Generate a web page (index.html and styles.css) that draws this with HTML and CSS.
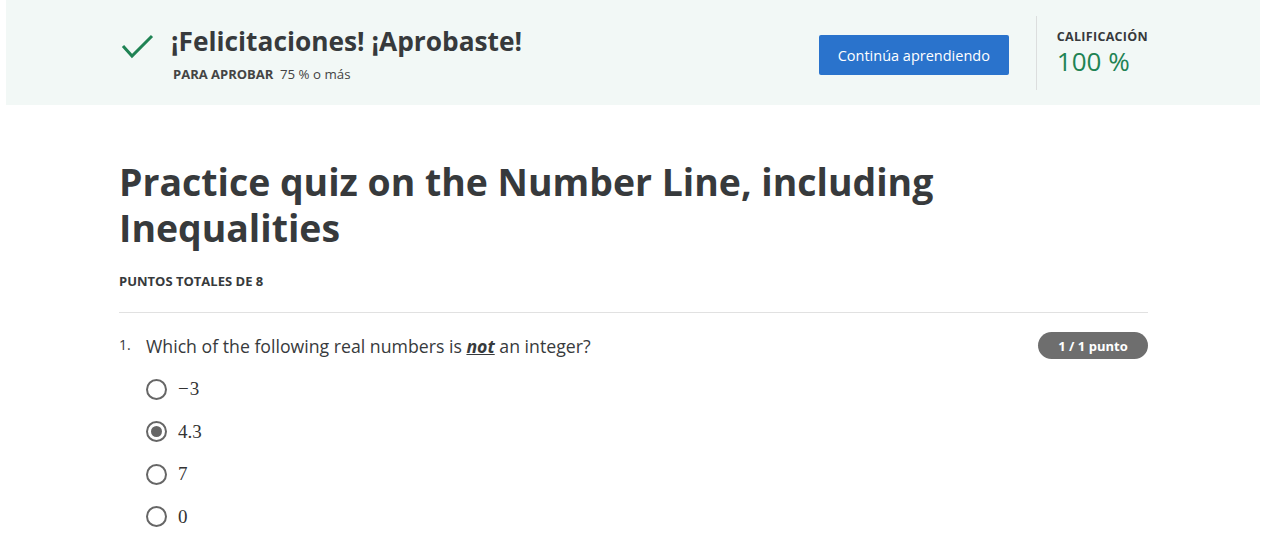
FILE: index.html
```html
<!DOCTYPE html>
<html lang="es">
<head>
<meta charset="utf-8">
<title>Practice quiz</title>
<link rel="stylesheet" href="styles.css">
</head>
<body>
<header class="banner">
  <div class="banner-inner">
    <div class="result">
      <svg class="check" width="34" height="26" viewBox="0 0 34 26"><polyline points="2,12 11,22 31,2" fill="none" stroke="#1f8354" stroke-width="3"/></svg>
      <div class="result-text">
        <h2 class="congrats">¡Felicitaciones! ¡Aprobaste!</h2>
        <p class="pass"><span class="pass-label">PARA APROBAR</span> 75 % o más</p>
      </div>
    </div>
    <button class="continue">Continúa aprendiendo</button>
    <div class="divider"></div>
    <div class="grade">
      <div class="grade-label">CALIFICACIÓN</div>
      <div class="grade-value">100 %</div>
    </div>
  </div>
</header>
<main class="content">
  <h1 class="title">Practice quiz on the Number Line, including Inequalities</h1>
  <div class="total">PUNTOS TOTALES DE 8</div>
  <hr class="rule">
  <section class="question">
    <div class="q-head">
      <span class="q-num">1.</span>
      <span class="q-text">Which of the following real numbers is <em class="not">not</em> an integer?</span>
      <span class="badge">1 / 1 punto</span>
    </div>
    <ul class="options">
      <li class="option"><span class="radio"></span><span class="math"><span class="minus">−</span>3</span></li>
      <li class="option"><span class="radio checked"></span><span class="math">4.3</span></li>
      <li class="option"><span class="radio"></span><span class="math">7</span></li>
      <li class="option"><span class="radio"></span><span class="math">0</span></li>
    </ul>
  </section>
</main>
</body>
</html>
```
FILE: styles.css
```css
* { box-sizing: border-box; }
body {
  margin: 0;
  font-family: "Open Sans", "Noto Sans", sans-serif;
  color: #373a3c;
  background: #fff;
}
.banner {
  margin: 0 10px 0 6px;
  height: 105px;
  background: #f2f8f6;
}
.banner-inner {
  margin-left: 113px;
  width: 1029px;
  height: 105px;
  display: flex;
  align-items: center;
}
.result {
  display: flex;
  align-items: flex-start;
  flex: 1;
  align-self: flex-start;
  margin-top: 24px;
}
.check { margin: 10px 16px 0 2px; }
.congrats {
  margin: 0;
  font-size: 26.3px;
  font-weight: 700;
  line-height: 34px;
  color: #373a3c;
}
.pass {
  margin: 7px 0 0 2px;
  font-size: 13.3px;
  line-height: 18px;
  color: #444;
}
.pass-label { font-weight: 700; font-size: 13px; margin-right: 3px; }
.continue {
  width: 190px;
  height: 40px;
  margin-top: 5px;
  border: 0;
  border-radius: 2px;
  background: #2a73cc;
  color: #fff;
  font-family: "Open Sans", sans-serif;
  font-size: 14.5px;
}
.divider {
  width: 1px;
  height: 74px;
  background: #dcdede;
  margin: 0 20px 0 27px;
}
.grade { align-self: flex-start; margin-top: 29px; }
.grade-label { font-size: 12.5px; line-height: 16px; font-weight: 700; letter-spacing: 0.3px; color: #373a3c; }
.grade-value { font-size: 26px; line-height: 28px; margin-top: 2px; color: #1f8354; }
.content {
  margin-left: 119px;
  width: 1029px;
  padding-top: 54px;
}
.title {
  margin: 0;
  font-size: 37.4px;
  line-height: 46px;
  font-weight: 700;
  width: 840px;
}
.total {
  margin-top: 21px;
  font-size: 13px;
  line-height: 18px;
  font-weight: 700;
}
.rule {
  margin: 22px 0 0;
  border: 0;
  border-top: 1px solid #e1e1e1;
}
.q-head {
  display: flex;
  align-items: center;
  margin-top: 19px;
}
.q-num { font-size: 14px; width: 27px; margin-top: -3px; }
.q-text { font-size: 17.7px; flex: 1; }
.not { font-weight: 700; text-decoration: underline; }
.badge {
  width: 110px;
  height: 27px;
  border-radius: 14px;
  background: #6e6e6e;
  color: #fff;
  font-size: 13px;
  font-weight: 700;
  display: flex;
  align-items: center;
  justify-content: center;
}
.options {
  list-style: none;
  margin: 9px 0 0 27px;
  padding: 0;
}
.option {
  display: flex;
  align-items: center;
  height: 42.5px;
}
.radio {
  width: 21px;
  height: 21px;
  border: 2px solid #666;
  border-radius: 50%;
  margin-right: 11px;
  display: flex;
  align-items: center;
  justify-content: center;
}
.radio.checked::after {
  content: "";
  width: 11px;
  height: 11px;
  border-radius: 50%;
  background: #666;
}
.math {
  font-family: "Liberation Serif", "DejaVu Serif", serif;
  font-size: 19px;
  color: #333;
}
.minus { margin-right: 1px; }
```
